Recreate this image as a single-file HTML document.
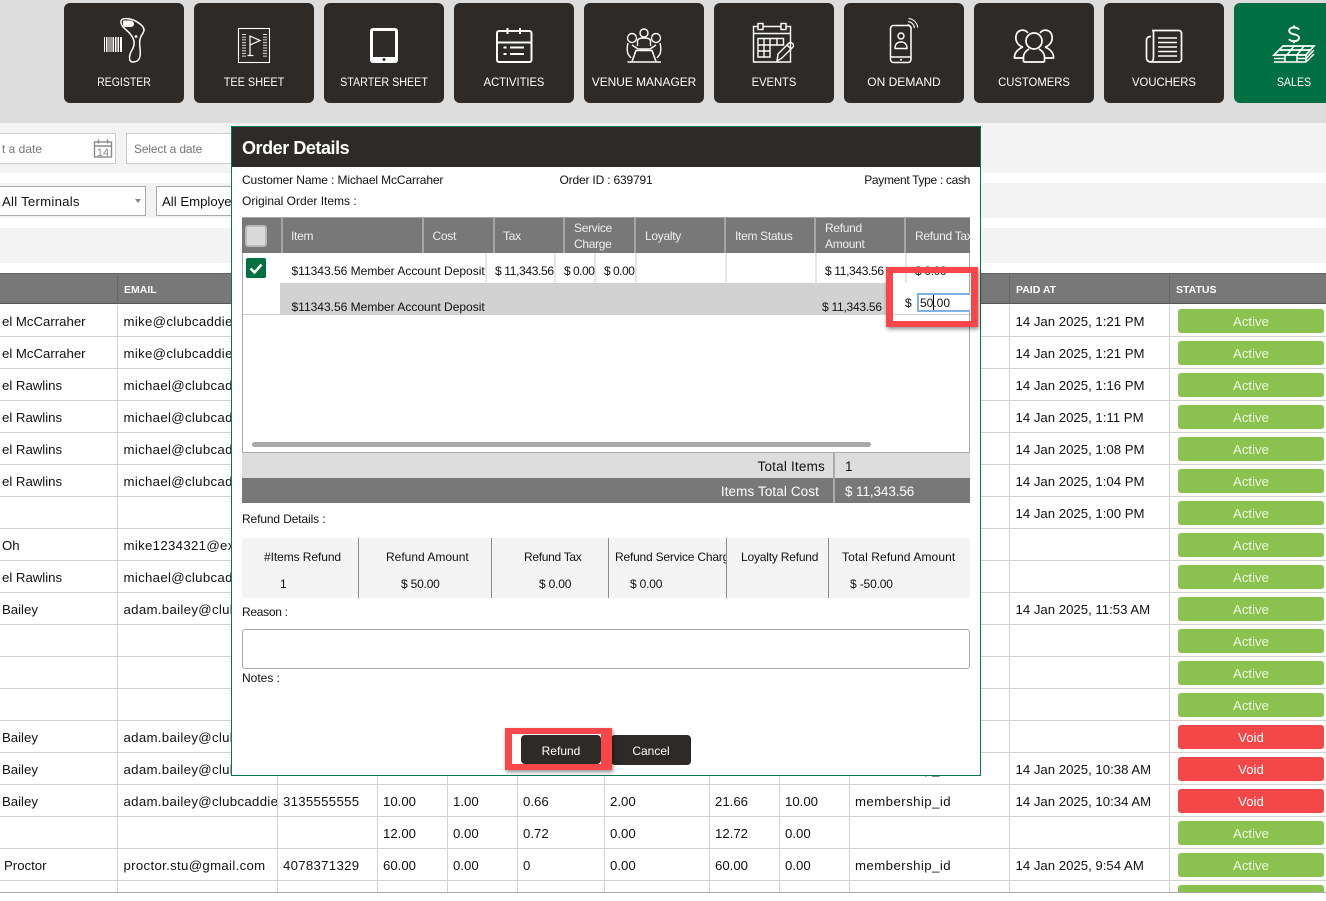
<!DOCTYPE html>
<html><head><meta charset="utf-8"><title>Order Details</title>
<style>
html,body{margin:0;padding:0;background:#fff}
#p{position:relative;width:1326px;height:901px;overflow:hidden;background:#fff;font-family:"Liberation Sans",sans-serif;font-size:13.2px;color:#111}
#p div{position:absolute}
.tile{top:3px;width:120px;height:100px;background:#2e2a27;border-radius:6px}
.tl{top:71px;left:0;width:100%;text-align:center;color:#fff;font-size:12.4px;line-height:16px;white-space:nowrap}
.t{position:absolute;white-space:nowrap;line-height:16px}
.e{letter-spacing:.33px}
.ms{letter-spacing:.45px}
.ph{letter-spacing:.3px}
.vl{top:305px;width:1px;height:587px;background:#d2d2d2}
.hv{top:275px;width:1px;height:29px;background:#666}
.a,.v{left:1178px;width:146px;height:24px;border-radius:3px;text-align:center;line-height:26px;font-size:13.2px;color:#eef6e2;background:#8bc14f}
.v{background:#f44848;color:#fff}
.mm .t{font-size:12px}
.hd{top:218px;width:2px;height:35px;background:#a5a5a5}
.hdt{color:#eee;letter-spacing:-.3px}
.bd{top:253px;width:2px;height:30px;background:#e6e6e6}
.rd{top:538px;width:1px;height:60px;background:#8a8a8a}
.btn{background:#2e2a27;border-radius:4px;color:#fff;font-size:12px;text-align:center}
.red{border:solid #f9464a;box-shadow:1px 2px 4px rgba(0,0,0,.45)}
</style></head><body><div id="p">

<div style="left:0;top:0;width:1326px;height:123px;background:#ddd"></div>
<div class="tile" style="left:64px"><div class="tl" style="transform:scaleX(.85)">REGISTER</div></div>
<div class="tile" style="left:194px"><div class="tl" style="transform:scaleX(.88)">TEE SHEET</div></div>
<div class="tile" style="left:324px"><div class="tl" style="transform:scaleX(.865)">STARTER SHEET</div></div>
<div class="tile" style="left:454px"><div class="tl" style="transform:scaleX(.9)">ACTIVITIES</div></div>
<div class="tile" style="left:584px"><div class="tl" style="transform:scaleX(.96)">VENUE MANAGER</div></div>
<div class="tile" style="left:714px"><div class="tl" style="transform:scaleX(.9)">EVENTS</div></div>
<div class="tile" style="left:844px"><div class="tl" style="transform:scaleX(.97)">ON DEMAND</div></div>
<div class="tile" style="left:974px"><div class="tl" style="transform:scaleX(.91)">CUSTOMERS</div></div>
<div class="tile" style="left:1104px"><div class="tl" style="transform:scaleX(.91)">VOUCHERS</div></div>
<div class="tile" style="left:1234px;width:92px;border-radius:6px 0 0 6px;background:#006f41"><div class="tl" style="width:120px;transform:scaleX(.86)">SALES</div></div>

<svg style="position:absolute;left:0;top:0;z-index:1" width="1326" height="123" fill="none" stroke="#fff" stroke-width="1.4">
<!-- register -->
<path d="M104.500 37v15M106.500 37v15M108 37v15M110 37v15M112 37v15M113.500 37v15M115.500 37v15M117 37v15M118.500 37v15M120.500 37v15M121.500 37v15" stroke-width="1"/>
<path d="M121 21C122 17 133 18 140 24C144 27 145 30 143 33C140 37 139 41 140 48C141 56 140 62 133 62C128 62 129 55 132 50C135 45 135 40 131 35C128 30 120 27 121 21Z" stroke-width="1.500"/>
<path d="M123 20.500h7c3 0 4 2 4 3.500s-1 3-4 3h-4c-2 0-3-1-3-3z" fill="#fff" stroke="none"/>
<circle cx="136" cy="36.500" r="1.400" fill="#fff" stroke="none"/>
<!-- tee sheet -->
<rect x="238.500" y="28.500" width="31" height="34" stroke-width="1.100"/>
<path d="M244 34v24M265 34v24" stroke-width="4" stroke-dasharray="1 1.700" stroke="#ddd"/>
<path d="M250 55V36l10 4.500-10 4.500M247.500 55.500h6" stroke-width="1.200"/>
<!-- tablet -->
<rect x="370" y="28" width="28" height="35" rx="3" fill="#fff" stroke="none"/>
<rect x="373" y="31" width="22" height="26" fill="#2e2a27" stroke="none"/>
<circle cx="384" cy="59.500" r="1.500" fill="#2e2a27" stroke="none"/>
<!-- activities -->
<rect x="497" y="31" width="34.500" height="31" rx="2" stroke-width="2"/>
<path d="M497 42.500h34.500M507.500 28v6M520 28v6" stroke-width="2"/>
<path d="M503.500 47.500h3M510 47.500h14M503.500 54h3M510 54h14" stroke-width="2"/>
<!-- venue -->
<circle cx="644" cy="33" r="4"/><circle cx="632" cy="38" r="4.500"/><circle cx="656" cy="38" r="4.500"/>
<path d="M637.500 46v-5c0-2 2-3 6.500-3s6.500 1 6.500 3v5M628 43c-1 4-1 8 0 11l3 4M660 43c1 4 1 8 0 11l-3 4M632 45l6 4h12l6-4"/>
<path d="M632 61.500l4-11h16l4 11M627.500 62h33.500" stroke-width="1.500"/>
<!-- events -->
<path d="M763 26.500h18M786 26.500h4.500v35.500H753.500V26.500h4.500M753.500 33.500h37M790.500 33.500v14" stroke-width="1.400"/>
<rect x="758" y="23.500" width="5" height="6"/><rect x="781" y="23.500" width="5" height="6"/>
<path d="M758 38.500h25.500v6.500H770v12h-12zM764 38.500v18.500M770 38.500v6.500M777 38.500v6.500M758 45h12M758 51h12" stroke-width="1.400"/>
<path d="M778 54l11-11c2-2 6 2 4 4l-11 11-5 3zM787 45l4 4" stroke-width="1.400"/>
<!-- on demand -->
<rect x="890.500" y="25.500" width="20.500" height="37" rx="3" stroke-width="1.500"/>
<path d="M890.500 57h20.500" stroke-width="1.400"/>
<circle cx="901" cy="59.700" r="1" fill="#fff" stroke="none"/>
<circle cx="901" cy="36" r="3"/>
<path d="M895 48.500c0-4 2-6.500 6-6.500s6 2.500 6 6.500z" stroke-width="1.400"/>
<path d="M907.500 24.500c2 .3 3.700 2 4 4M908 21.500c3.500.3 6 3 6.500 6.500M908.500 18.500c5 .4 8.600 4.300 9.200 9" stroke-width="1.100"/>
<!-- customers -->
<g stroke-width="1.700">
<path d="M1028 33C1024 28 1017 30 1016 36C1015 42 1019 46 1023 47M1040 33C1044 28 1051 30 1052 36C1053 42 1049 46 1045 47"/>
<circle cx="1034" cy="41" r="8"/>
<path d="M1023 47C1018 49 1014 53 1014.500 58H1023M1045 47C1050 49 1054 53 1053.500 58H1045"/>
<path d="M1023.500 62V57C1023.500 53 1027 50 1029 49M1044.500 62V57C1044.500 53 1041 50 1039 49M1023.500 62H1044.500"/>
</g>
<!-- vouchers -->
<g stroke-width="1.700">
<path d="M1152 30.500h26.500c2 0 3 1 3 3V59c0 2-1 3-3 3H1151c-3 0-4.500-2-4.500-4V40c0-2 1.500-3.500 4.500-3.500M1151.500 62c1.500-1 2-3 2-5V30.500"/>
<path d="M1158 38h19M1158 42.500h19M1158 47h19M1158 51.500h19M1158 56h19" stroke-width="1.500"/>
</g>
<!-- sales -->
<g stroke-width="2">
<path d="M1299 29.500c-1-1.200-3-2-5-2-3 0-4.800 1.300-4.800 3.300s2 3 4.800 3.500 5 1.500 5 3.500-2 3.400-5 3.400c-2 0-4-.7-5-2M1294 25.500v2M1294 41.200v2"/>
</g>
<g stroke-width="1.700">
<path d="M1283 46H1314L1306 55H1274ZM1294 46L1287 55M1304 46L1297 55M1280 50H1310"/>
<path d="M1274 58.500H1285M1274 62H1306M1285 55V62M1297 55V62M1297 58.500H1306M1306 58.500L1314 50M1306 62L1314 54M1306 55V62" stroke-width="1.500"/>
</g>
</svg>

<!-- filter panels -->
<div style="left:0;top:123px;width:1326px;height:50px;background:#f3f3f3"></div>
<div style="left:0;top:183px;width:1326px;height:35px;background:#f3f3f3"></div>
<div style="left:0;top:228px;width:1326px;height:35px;background:#f3f3f3"></div>
<div style="left:-30px;top:133px;width:144px;height:29px;background:#fff;border:1px solid #ccc"></div>
<span class="t" style="left:-1px;top:141px;font-size:12px;color:#777;width:43px;text-align:right">t a date</span>
<svg style="position:absolute;left:93px;top:138px" width="20" height="20" fill="none" stroke="#8a8a8a"><rect x="1.500" y="4" width="17" height="15" stroke-width="1.400"/><path d="M1.500 8h17M5.500 1.500v4M14.500 1.500v4" stroke-width="1.500"/><text x="10" y="18" font-size="11" font-family="Liberation Sans" fill="#8a8a8a" stroke="none" text-anchor="middle">14</text></svg>
<div style="left:126px;top:133px;width:110px;height:29px;background:#fff;border:1px solid #ccc"></div>
<span class="t" style="left:134px;top:141px;font-size:12px;color:#777;letter-spacing:-.15px">Select a date</span>
<div style="left:-20px;top:186px;width:164px;height:28px;background:#fff;border:1px solid #aaa"></div>
<span class="t" style="left:2px;top:194px;letter-spacing:.25px">All Terminals</span>
<div style="left:135px;top:199px;border:3px solid transparent;border-top:4px solid #888"></div>
<div style="left:156px;top:186px;width:100px;height:28px;background:#fff;border:1px solid #aaa"></div>
<span class="t" style="left:162px;top:194px">All Employee</span>

<!-- main table -->
<div style="left:0;top:273px;width:1326px;height:31px;background:#787878;border-top:1.500px solid #666;box-sizing:border-box;border-bottom:1px solid #555"></div>
<div class="hv" style="left:117px"></div><div class="hv" style="left:1009px"></div><div class="hv" style="left:1169px"></div>
<span class="t" style="left:124px;top:282px;color:#fff;font-size:10.500px;font-weight:bold">EMAIL</span>
<span class="t" style="left:1016px;top:282px;color:#fff;font-size:10.500px;font-weight:bold">PAID AT</span>
<span class="t" style="left:1176px;top:282px;color:#fff;font-size:10.500px;font-weight:bold">STATUS</span>
<div style="left:0;top:305px;width:1326px;height:587px;background:repeating-linear-gradient(to bottom,#fff 0,#fff 31px,#d2d2d2 31px,#d2d2d2 32px)"></div>
<div class="vl" style="left:117px"></div><div class="vl" style="left:277px"></div><div class="vl" style="left:377px"></div><div class="vl" style="left:447px"></div><div class="vl" style="left:517px"></div><div class="vl" style="left:604px"></div><div class="vl" style="left:709px"></div><div class="vl" style="left:779px"></div><div class="vl" style="left:849px"></div><div class="vl" style="left:1009px"></div><div class="vl" style="left:1169px"></div>

<div style="left:0;top:1px;width:1326px;height:1px">
<span class="t" style="left:2px;top:313px">el McCarraher</span><span class="t e" style="left:123.500px;top:313px">mike@clubcaddie.com</span><span class="t" style="left:1015.500px;top:313px">14 Jan 2025, 1:21 PM</span>
<span class="t" style="left:2px;top:345px">el McCarraher</span><span class="t e" style="left:123.500px;top:345px">mike@clubcaddie.com</span><span class="t" style="left:1015.500px;top:345px">14 Jan 2025, 1:21 PM</span>
<span class="t" style="left:2px;top:377px">el Rawlins</span><span class="t e" style="left:123.500px;top:377px">michael@clubcaddie.com</span><span class="t" style="left:1015.500px;top:377px">14 Jan 2025, 1:16 PM</span>
<span class="t" style="left:2px;top:409px">el Rawlins</span><span class="t e" style="left:123.500px;top:409px">michael@clubcaddie.com</span><span class="t" style="left:1015.500px;top:409px">14 Jan 2025, 1:11 PM</span>
<span class="t" style="left:2px;top:441px">el Rawlins</span><span class="t e" style="left:123.500px;top:441px">michael@clubcaddie.com</span><span class="t" style="left:1015.500px;top:441px">14 Jan 2025, 1:08 PM</span>
<span class="t" style="left:2px;top:473px">el Rawlins</span><span class="t e" style="left:123.500px;top:473px">michael@clubcaddie.com</span><span class="t" style="left:1015.500px;top:473px">14 Jan 2025, 1:04 PM</span>
<span class="t" style="left:1015.500px;top:505px">14 Jan 2025, 1:00 PM</span>
<span class="t" style="left:2px;top:537px">Oh</span><span class="t e" style="left:123.500px;top:537px">mike1234321@example.com</span>
<span class="t" style="left:2px;top:569px">el Rawlins</span><span class="t e" style="left:123.500px;top:569px">michael@clubcaddie.com</span>
<span class="t" style="left:2px;top:601px">Bailey</span><span class="t e" style="left:123.500px;top:601px">adam.bailey@clubcaddie</span><span class="t" style="left:1015.500px;top:601px">14 Jan 2025, 11:53 AM</span>
<span class="t" style="left:2px;top:729px">Bailey</span><span class="t e" style="left:123.500px;top:729px">adam.bailey@clubcaddie</span>
<span class="t" style="left:2px;top:761px">Bailey</span><span class="t e" style="left:123.500px;top:761px">adam.bailey@clubcaddie</span><span class="t ms" style="left:855px;top:761px">membership_id</span><span class="t" style="left:1015.500px;top:761px">14 Jan 2025, 10:38 AM</span>
<span class="t" style="left:2px;top:793px">Bailey</span><span class="t e" style="left:123.500px;top:793px;width:153px;overflow:hidden">adam.bailey@clubcaddie.com</span><span class="t ph" style="left:283px;top:793px">3135555555</span><span class="t" style="left:383px;top:793px">10.00</span><span class="t" style="left:453px;top:793px">1.00</span><span class="t" style="left:523px;top:793px">0.66</span><span class="t" style="left:610px;top:793px">2.00</span><span class="t" style="left:715px;top:793px">21.66</span><span class="t" style="left:785px;top:793px">10.00</span><span class="t ms" style="left:855px;top:793px">membership_id</span><span class="t" style="left:1015.500px;top:793px">14 Jan 2025, 10:34 AM</span>
<span class="t" style="left:383px;top:825px">12.00</span><span class="t" style="left:453px;top:825px">0.00</span><span class="t" style="left:523px;top:825px">0.72</span><span class="t" style="left:610px;top:825px">0.00</span><span class="t" style="left:715px;top:825px">12.72</span><span class="t" style="left:785px;top:825px">0.00</span>
<span class="t" style="left:4px;top:857px">Proctor</span><span class="t e" style="left:123.500px;top:857px">proctor.stu@gmail.com</span><span class="t ph" style="left:283px;top:857px">4078371329</span><span class="t" style="left:383px;top:857px">60.00</span><span class="t" style="left:453px;top:857px">0.00</span><span class="t" style="left:523px;top:857px">0</span><span class="t" style="left:610px;top:857px">0.00</span><span class="t" style="left:715px;top:857px">60.00</span><span class="t" style="left:785px;top:857px">0.00</span><span class="t ms" style="left:855px;top:857px">membership_id</span><span class="t" style="left:1015.500px;top:857px">14 Jan 2025, 9:54 AM</span>
</div>

<div class="a" style="top:309px">Active</div><div class="a" style="top:341px">Active</div><div class="a" style="top:373px">Active</div><div class="a" style="top:405px">Active</div><div class="a" style="top:437px">Active</div><div class="a" style="top:469px">Active</div><div class="a" style="top:501px">Active</div><div class="a" style="top:533px">Active</div><div class="a" style="top:565px">Active</div><div class="a" style="top:597px">Active</div><div class="a" style="top:629px">Active</div><div class="a" style="top:661px">Active</div><div class="a" style="top:693px">Active</div>
<div class="v" style="top:725px">Void</div><div class="v" style="top:757px">Void</div><div class="v" style="top:789px">Void</div>
<div class="a" style="top:821px">Active</div><div class="a" style="top:853px">Active</div><div class="a" style="top:885px;height:7px;border-radius:3px 3px 0 0"></div>
<div style="left:0;top:892px;width:1326px;height:1px;background:#aaa"></div>
<div style="left:0;top:893px;width:1326px;height:8px;background:#fff"></div>

<!-- modal -->
<div style="left:231px;top:126px;width:750px;height:650px;box-sizing:border-box;border:1px solid #007a4d;background:#fff;z-index:5"></div>
<div class="mm" style="left:0;top:0;width:1326px;height:901px;z-index:6">
<div style="left:232px;top:127px;width:748px;height:40px;background:#2e2a27"></div>
<span class="t" style="left:242px;top:139px;color:#fff;font-size:18px;line-height:18px;font-weight:bold;letter-spacing:-.45px">Order Details</span>
<span class="t" style="left:242px;top:172px;letter-spacing:-.12px">Customer Name : Michael McCarraher</span>
<span class="t" style="left:559.500px;top:172px;letter-spacing:-.18px">Order ID : 639791</span>
<span class="t" style="right:356px;top:172px;letter-spacing:-.32px">Payment Type : cash</span>
<span class="t" style="left:242px;top:193px">Original Order Items :</span>

<div style="left:242px;top:217px;width:728px;height:236px;box-sizing:border-box;border:1px solid #aaa;border-top:0;background:#fff"></div>
<div style="left:242px;top:217px;width:728px;height:36px;box-sizing:border-box;border-top:1.500px solid #a5a5a5;background:#787878"></div>
<div class="hd" style="left:281px"></div><div class="hd" style="left:422px"></div><div class="hd" style="left:492.500px"></div><div class="hd" style="left:563px"></div><div class="hd" style="left:634px"></div><div class="hd" style="left:724px"></div><div class="hd" style="left:814px"></div><div class="hd" style="left:904px"></div>
<div style="left:245px;top:225px;width:22px;height:22px;box-sizing:border-box;background:#d8dadc;border:2px solid #b8b8b8;border-radius:3px"></div>
<span class="t hdt" style="left:291px;top:228px">Item</span><span class="t hdt" style="left:432.500px;top:228px">Cost</span><span class="t hdt" style="left:503px;top:228px">Tax</span>
<span class="t hdt" style="left:574px;top:220px">Service</span><span class="t hdt" style="left:574px;top:236px">Charge</span>
<span class="t hdt" style="left:645px;top:228px">Loyalty</span><span class="t hdt" style="left:735px;top:228px">Item Status</span>
<span class="t hdt" style="left:825px;top:220px">Refund</span><span class="t hdt" style="left:825px;top:236px">Amount</span>
<span class="t hdt" style="left:915px;top:228px;width:55px;overflow:hidden">Refund Tax</span>

<div class="bd" style="left:485px"></div><div class="bd" style="left:554px"></div><div class="bd" style="left:594px"></div><div class="bd" style="left:635px"></div><div class="bd" style="left:725px"></div><div class="bd" style="left:815px"></div><div class="bd" style="left:905px"></div>
<div style="left:246px;top:258px;width:20px;height:20px;background:#006f41;border-radius:2px"></div>
<svg style="position:absolute;left:246px;top:258px" width="20" height="20" fill="none" stroke="#fff" stroke-width="2.600"><path d="M4.500 10.500l4 4 7-8"/></svg>
<span class="t" style="left:291.500px;top:263px">$11343.56 Member Account Deposit</span>
<span class="t" style="left:495px;top:263px;letter-spacing:-.35px">$ 11,343.56</span><span class="t" style="left:564px;top:263px;letter-spacing:-.5px">$ 0.00</span><span class="t" style="left:604px;top:263px;letter-spacing:-.5px">$ 0.00</span><span class="t" style="left:825px;top:263px;letter-spacing:-.35px">$ 11,343.56</span><span class="t" style="left:915px;top:263px;letter-spacing:-.35px">$ 0.00</span>
<div style="left:280px;top:283px;width:610px;height:32px;background:#d2d2d2"></div>
<div style="left:243px;top:314px;width:37px;height:1px;background:#ccc"></div>
<div style="left:890px;top:314px;width:79px;height:1px;background:#ccc"></div>
<span class="t" style="left:291.500px;top:299px">$11343.56 Member Account Deposit</span>
<span class="t" style="left:822px;top:299px;letter-spacing:-.25px">$ 11,343.56</span>
<span class="t" style="left:905px;top:295px">$</span>
<div style="left:917px;top:293px;width:53px;height:19px;box-sizing:border-box;border:2px solid #7fb2e5;border-right:0;background:#fff"></div>
<span class="t" style="left:920px;top:295px">50.00</span>
<div style="left:933px;top:295px;width:1px;height:15px;background:#000"></div>
<div style="left:252px;top:442px;width:619px;height:5px;background:#aaa;border-radius:3px"></div>

<div style="left:242px;top:453px;width:728px;height:25px;background:#ddd"></div>
<div style="left:242px;top:478px;width:728px;height:25px;background:#787878"></div>
<div style="left:833px;top:453px;width:2px;height:50px;background:#aaa"></div>
<span class="t" style="right:501px;top:459px;font-size:13.500px;letter-spacing:.2px">Total Items</span>
<span class="t" style="left:845px;top:459px;font-size:13.500px">1</span>
<span class="t" style="right:507px;top:484px;color:#fff;font-size:13.500px;letter-spacing:.1px">Items Total Cost</span>
<span class="t" style="left:845px;top:484px;color:#fff;font-size:13.500px;letter-spacing:-.1px">$ 11,343.56</span>

<span class="t" style="left:242px;top:511px;letter-spacing:-.12px">Refund Details :</span>
<div style="left:242px;top:538px;width:728px;height:60px;background:#f4f4f4"></div>
<div class="rd" style="left:358px"></div><div class="rd" style="left:491px"></div><div class="rd" style="left:608px"></div><div class="rd" style="left:726px"></div><div class="rd" style="left:828px"></div>
<span class="t" style="left:264px;top:549px;letter-spacing:-.08px">#Items Refund</span><span class="t" style="left:280px;top:576px">1</span>
<span class="t" style="left:386px;top:549px">Refund Amount</span><span class="t" style="left:401px;top:576px;letter-spacing:-.2px">$ 50.00</span>
<span class="t" style="left:524px;top:549px;letter-spacing:-.3px">Refund Tax</span><span class="t" style="left:539px;top:576px;letter-spacing:-.2px">$ 0.00</span>
<span class="t" style="left:615px;top:549px;width:111px;overflow:hidden;letter-spacing:-.2px">Refund Service Charge</span><span class="t" style="left:630px;top:576px;letter-spacing:-.2px">$ 0.00</span>
<span class="t" style="left:741px;top:549px;letter-spacing:-.2px">Loyalty Refund</span>
<span class="t" style="left:842px;top:549px;letter-spacing:.1px">Total Refund Amount</span><span class="t" style="left:850px;top:576px;letter-spacing:-.15px">$ -50.00</span>

<span class="t" style="left:242px;top:604px;letter-spacing:-.3px">Reason :</span>
<div style="left:242px;top:629px;width:728px;height:40px;box-sizing:border-box;border:1px solid #aaa;border-radius:3px;background:#fff"></div>
<span class="t" style="left:242px;top:670px">Notes :</span>

<div class="btn" style="left:521px;top:735px;width:80px;height:29px;line-height:32px">Refund</div>
<div class="btn" style="left:611px;top:735px;width:80px;height:30px;line-height:32px">Cancel</div>
<div class="red" style="left:505px;top:728px;width:89px;height:30px;border-width:6px 11px 6px 7px;background:transparent"></div>
<div class="red" style="left:886px;top:267px;width:78px;height:48px;border-width:6px 7px 6px 7px;background:transparent"></div>
</div>
</div></body></html>
